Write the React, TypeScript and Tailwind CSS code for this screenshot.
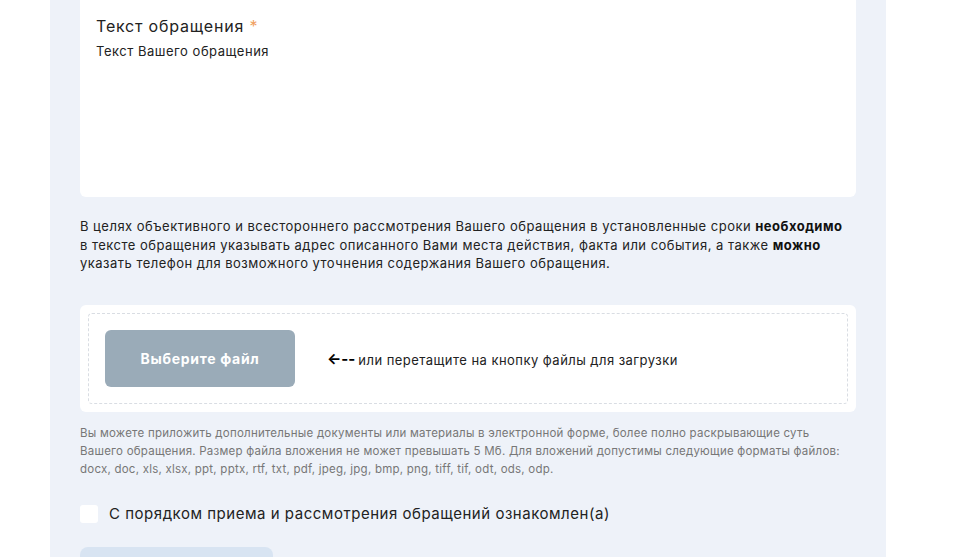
const App = () => {
  return (
    <div className="min-h-screen bg-white font-['Inter',sans-serif] tracking-[0.045em] text-[#1a1a1a]">
      <div className="ml-[50px] w-[836px] bg-[#eef2f9] px-[30px] pb-0">
        <div className="h-[197px] rounded-b-[6px] bg-white px-4 pt-[15px]">
          <div className="text-[16px] leading-[22px] tracking-[0.05em] text-[#222]">
            Текст обращения <span className="text-[#f0a060]">*</span>
          </div>
          <div className="mt-[5px] text-[13px] leading-[18px] tracking-[0.04em] text-[#222]">
            Текст Вашего обращения
          </div>
        </div>

        <p className="mt-[20px] whitespace-nowrap text-[13px] leading-[18.5px] tracking-[0.037em] text-[#222]">
          В целях объективного и всестороннего рассмотрения Вашего обращения в установленные сроки{" "}
          <b className="font-bold text-[#111]">необходимо</b>
          <br />
          в тексте обращения указывать адрес описанного Вами места действия, факта или события, а также{" "}
          <b className="font-bold text-[#111]">можно</b>
          <br />
          указать телефон для возможного уточнения содержания Вашего обращения.
        </p>

        <div className="mt-[32px] rounded-[6px] bg-white p-2">
          <div className="flex h-[91px] items-center rounded-[4px] border border-dashed border-[#d9dde3] px-4">
            <button
              type="button"
              className="h-[57px] w-[190px] rounded-[6px] bg-[#9aabb8] text-[14px] font-bold tracking-[0.05em] text-white"
            >
              Выберите файл
            </button>
            <div className="ml-[32px] flex items-center text-[13px] tracking-[0.035em] text-[#222]">
              <span className="text-[15px] font-bold leading-none tracking-normal text-black">←--</span>
              <span className="ml-[3px] mt-[6px]">или перетащите на кнопку файлы для загрузки</span>
            </div>
          </div>
        </div>

        <p className="mt-[12px] whitespace-nowrap text-[11.5px] leading-[18px] tracking-[0.02em] text-[#777]">
          Вы можете приложить дополнительные документы или материалы в электронной форме, более полно раскрывающие
          суть
          <br />
          Вашего обращения. Размер файла вложения не может превышать 5 Мб. Для вложений допустимы следующие форматы
          файлов:
          <br />
          docx, doc, xls, xlsx, ppt, pptx, rtf, txt, pdf, jpeg, jpg, bmp, png, tiff, tif, odt, ods, odp.
        </p>

        <label className="mt-[26px] flex items-center gap-[11px]">
          <input type="checkbox" className="h-[18px] w-[18px] appearance-none rounded-[3px] bg-white" />
          <span className="text-[15px] leading-[20px] tracking-[0.035em] text-[#222]">
            С порядком приема и рассмотрения обращений ознакомлен(а)
          </span>
        </label>

        <div className="mt-[23px] h-[20px] w-[193px] rounded-t-[8px] bg-[#d8e4f2]" />
      </div>
    </div>
  );
};

export default App;
